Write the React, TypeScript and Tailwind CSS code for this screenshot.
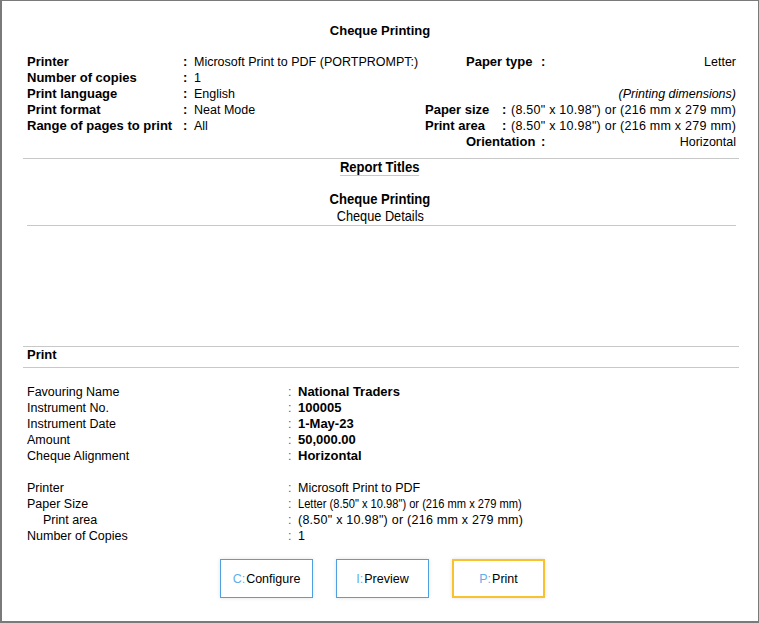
const topLeft = [
  ['Printer', 'Microsoft Print to PDF (PORTPROMPT:)'],
  ['Number of copies', '1'],
  ['Print language', 'English'],
  ['Print format', 'Neat Mode'],
  ['Range of pages to print', 'All'],
];

const chequeRows = [
  ['Favouring Name', 'National Traders'],
  ['Instrument No.', '100005'],
  ['Instrument Date', '1-May-23'],
  ['Amount', '50,000.00'],
  ['Cheque Alignment', 'Horizontal'],
];

function Button({ hotkey, label, active }: { hotkey: string; label: string; active?: boolean }) {
  return (
    <div
      className={`h-[39px] w-[93px] flex items-center justify-center bg-white shadow-[0_0_4px_rgba(0,0,0,0.12)] ${
        active ? 'border-2 border-[#f8c12e]' : 'border border-[#4ea0e0]'
      }`}
    >
      <span className="text-[#62aee9]">{hotkey}</span>
      <span className="ml-px">{label}</span>
    </div>
  );
}

export default function App() {
  return (
    <div className="w-[759px] h-[623px] bg-white border-t border-r border-b-2 border-l-2 border-[#7a7a7a] text-[12.5px] leading-4 text-black font-['Liberation_Sans',Arial,sans-serif] flex flex-col">
      {/* Header */}
      <div className="pt-[22px] text-center font-bold text-[13px]">Cheque Printing</div>

      <div className="mt-[15px] flex pl-[25px] pr-[22px]">
        <div className="grid grid-cols-[156px_11px_auto] auto-rows-[16px]">
          {topLeft.map(([k, v]) => (
            <div key={k} className="contents">
              <div className="font-bold text-[13px] whitespace-nowrap">{k}</div>
              <div className="font-bold text-[13px]">:</div>
              <div className="whitespace-nowrap">{v}</div>
            </div>
          ))}
        </div>
        <div className="flex-1" />
        <div className="w-[311px] flex flex-col">
          <div className="h-4 grid grid-cols-[41px_75px_10px_1fr]">
            <div />
            <div className="font-bold text-[13px]">Paper type</div>
            <div className="font-bold text-[13px]">:</div>
            <div className="text-right">Letter</div>
          </div>
          <div className="h-4" />
          <div className="h-4 text-right italic">(Printing dimensions)</div>
          <div className="h-4 grid grid-cols-[77px_9px_1fr]">
            <div className="font-bold text-[13px]">Paper size</div>
            <div className="font-bold text-[13px]">:</div>
            <div className="text-right whitespace-nowrap tracking-[0.25px]">(8.50" x 10.98") or (216 mm x 279 mm)</div>
          </div>
          <div className="h-4 grid grid-cols-[77px_9px_1fr]">
            <div className="font-bold text-[13px]">Print area</div>
            <div className="font-bold text-[13px]">:</div>
            <div className="text-right whitespace-nowrap tracking-[0.25px]">(8.50" x 10.98") or (216 mm x 279 mm)</div>
          </div>
          <div className="h-4 grid grid-cols-[41px_75px_10px_1fr]">
            <div />
            <div className="font-bold text-[13px]">Orientation</div>
            <div className="font-bold text-[13px]">:</div>
            <div className="text-right">Horizontal</div>
          </div>
        </div>
      </div>

      <div className="mt-2 ml-[21px] mr-[19px] h-px bg-[#c8c8c8]" />

      {/* Report titles */}
      <div className="text-center">
        <span className="inline-block font-bold text-[15px] leading-4 border-b border-[#c8c8c8] scale-x-[0.87]">
          Report Titles
        </span>
      </div>
      <div className="mt-[15px] text-center">
        <span className="inline-block font-bold text-[15px] leading-4 scale-x-[0.87]">Cheque Printing</span>
      </div>
      <div className="text-center">
        <span className="inline-block text-[15px] leading-4 scale-x-[0.85]">Cheque Details</span>
      </div>
      <div className="ml-[25px] mr-[22px] h-px bg-[#c8c8c8]" />

      <div className="mt-[120px] ml-[21px] mr-[19px] h-px bg-[#c8c8c8]" />
      <div className="h-5 pl-[25px] font-bold text-[13px] leading-4">Print</div>
      <div className="ml-[21px] mr-[19px] h-px bg-[#c8c8c8]" />

      {/* Details */}
      <div className="mt-4 pl-[25px] grid grid-cols-[261px_10px_auto] auto-rows-[16px]">
        {chequeRows.map(([k, v]) => (
          <div key={k} className="contents">
            <div>{k}</div>
            <div className="text-[#666]">:</div>
            <div className="font-bold text-[13px]">{v}</div>
          </div>
        ))}
        <div className="col-span-3" />
        <div>Printer</div>
        <div className="text-[#666]">:</div>
        <div>Microsoft Print to PDF</div>
        <div>Paper Size</div>
        <div className="text-[#666]">:</div>
        <div>
          <span className="inline-block whitespace-nowrap origin-left scale-x-[0.89]">
            Letter (8.50" x 10.98") or (216 mm x 279 mm)
          </span>
        </div>
        <div className="pl-4">Print area</div>
        <div className="text-[#666]">:</div>
        <div className="whitespace-nowrap tracking-[0.25px]">(8.50" x 10.98") or (216 mm x 279 mm)</div>
        <div>Number of Copies</div>
        <div className="text-[#666]">:</div>
        <div>1</div>
      </div>

      {/* Actions */}
      <div className="mt-[15px] pl-[5px] flex justify-center gap-[23px]">
        <Button hotkey="C:" label="Configure" />
        <Button hotkey="I:" label="Preview" />
        <Button hotkey="P:" label="Print" active />
      </div>
    </div>
  );
}
